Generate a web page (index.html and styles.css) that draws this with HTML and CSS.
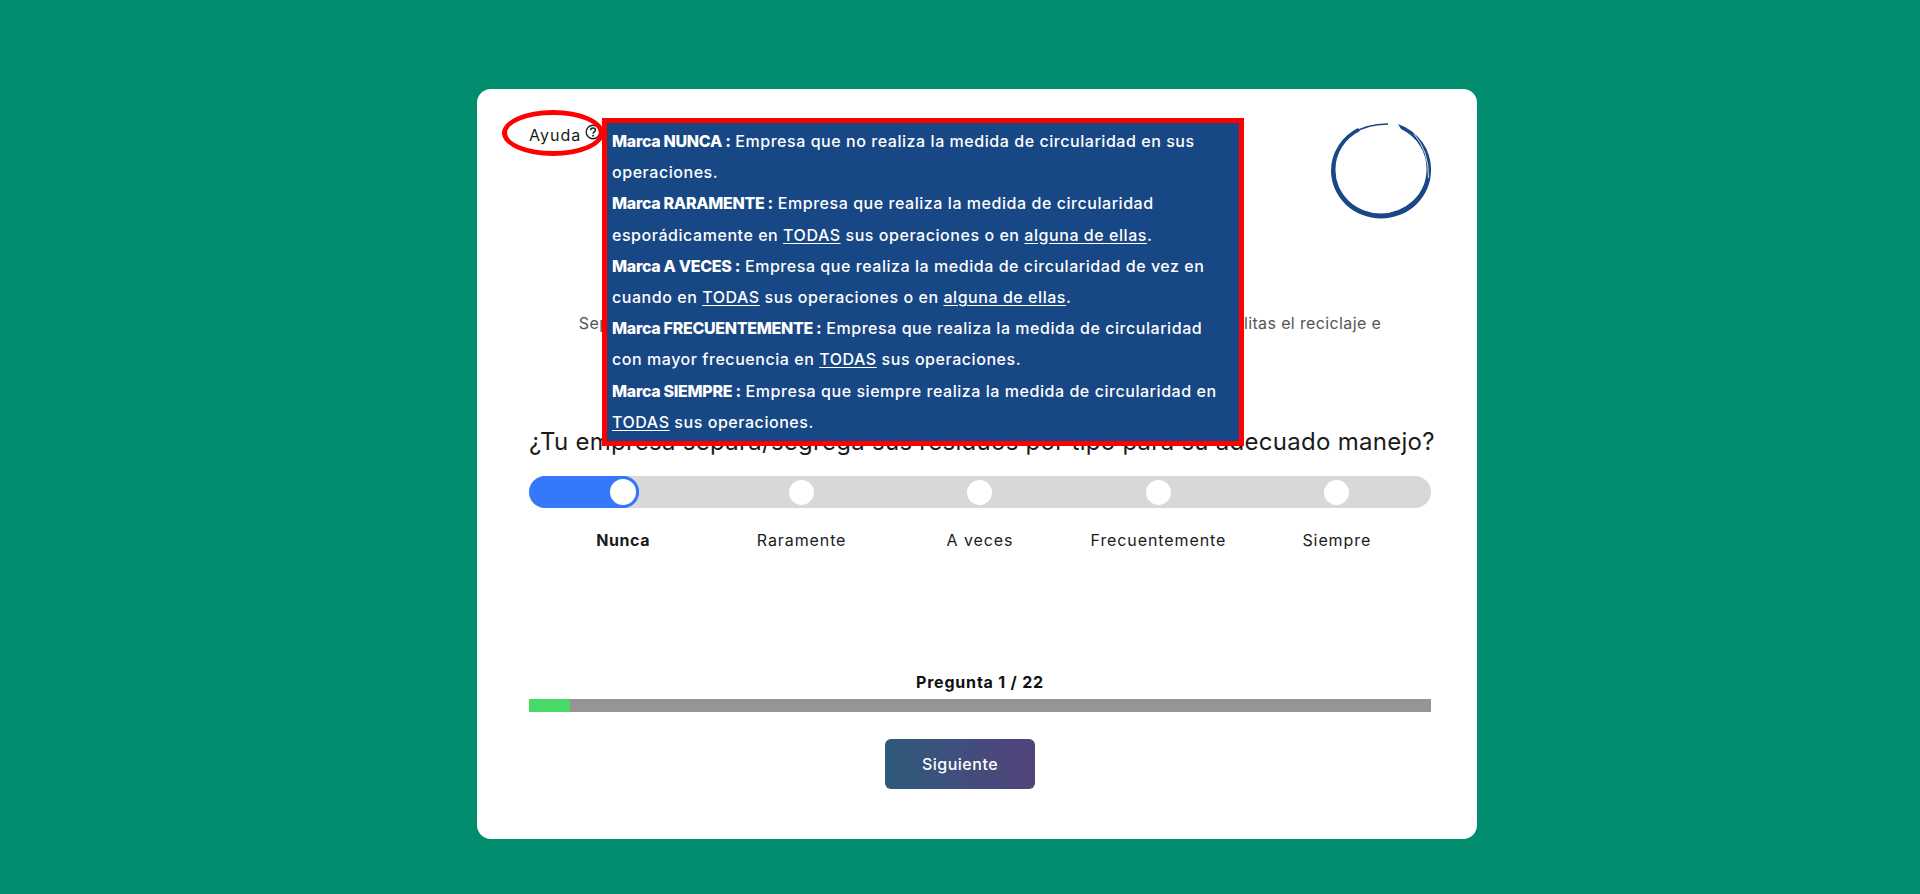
FILE: index.html
```html
<!DOCTYPE html>
<html lang="es">
<head>
<meta charset="utf-8">
<title>Encuesta de circularidad</title>
<link rel="stylesheet" href="styles.css">
</head>
<body>
<main class="card">
  <header class="top">
    <div class="help">
      <span class="help-label">Ayuda</span>
      <svg class="help-icon" viewBox="0 0 16 16" width="16" height="16" aria-hidden="true">
        <circle cx="8" cy="8" r="6.8" fill="none" stroke="#222" stroke-width="1.4"/>
        <path d="M5.6 6.2C5.7 4.6 6.8 3.9 8 3.9c1.4 0 2.4.8 2.4 2.1 0 1.8-2.3 1.8-2.3 3.7" fill="none" stroke="#222" stroke-width="1.5"/>
        <circle cx="8.1" cy="11.8" r="1" fill="#222"/>
      </svg>
    </div>
    <svg class="logo" viewBox="0 0 100 98" width="100" height="98" aria-hidden="true">
      <path d="M67 2A50 48 0 0 1 100 48.5A50 48 0 0 1 50 96.5A50 48 0 0 1 0 48.5A50 48 0 0 1 27 6L29 9A45.5 43 0 0 0 4.5 48A45.5 43 0 0 0 50 91.5A46 43.5 0 0 0 95.5 48A46 44 0 0 0 70 7Z" fill="#184785"/>
      <path d="M19 13Q34 2 57 2" fill="none" stroke="#184785" stroke-width="1.4"/>
      <path d="M83 12Q98 29 97.5 56" fill="none" stroke="#fff" stroke-width=".8"/>
    </svg>
  </header>

  <p class="lead">Separar los residuos desde su origen por tipo evita mezclarlos, reduce costos y facilitas el reciclaje e</p>

  <h2 class="question">¿Tu empresa separa/segrega sus residuos por tipo para su adecuado manejo?</h2>

  <div class="track">
    <div class="fill"></div>
    <div class="stops">
      <span class="stop"><i class="knob"></i></span>
      <span class="stop"><i class="dot"></i></span>
      <span class="stop"><i class="dot"></i></span>
      <span class="stop"><i class="dot"></i></span>
      <span class="stop"><i class="dot"></i></span>
    </div>
  </div>
  <div class="labels">
    <span class="label label-active">Nunca</span>
    <span class="label">Raramente</span>
    <span class="label">A veces</span>
    <span class="label">Frecuentemente</span>
    <span class="label">Siempre</span>
  </div>

  <p class="count">Pregunta 1 / 22</p>
  <div class="progress"><div class="progress-done"></div></div>
  <div class="actions"><button class="next" type="button">Siguiente</button></div>

  <div class="ring"></div>
  <aside class="popup">
    <b>Marca NUNCA :</b> Empresa que no realiza la medida de circularidad en sus<br>
    operaciones.<br>
    <b>Marca RARAMENTE :</b> Empresa que realiza la medida de circularidad<br>
    esporádicamente en <u>TODAS</u> sus operaciones o en <u>alguna de ellas</u>.<br>
    <b>Marca A VECES :</b> Empresa que realiza la medida de circularidad de vez en<br>
    cuando en <u>TODAS</u> sus operaciones o en <u>alguna de ellas</u>.<br>
    <b>Marca FRECUENTEMENTE :</b> Empresa que realiza la medida de circularidad<br>
    con mayor frecuencia en <u>TODAS</u> sus operaciones.<br>
    <b>Marca SIEMPRE :</b> Empresa que siempre realiza la medida de circularidad en<br>
    <u>TODAS</u> sus operaciones.
  </aside>
</main>
</body>
</html>
```
FILE: styles.css
```css
* { box-sizing: border-box; }
html, body { margin: 0; height: 100%; }
body {
  background: #018d6e;
  padding-top: 89px;
  font-family: Inter, "Noto Sans", "Liberation Sans", sans-serif;
  color: #1b1b1b;
  overflow: hidden;
}
.card {
  position: relative;
  width: 1000px;
  height: 750px;
  margin-left: 477px;
  padding: 33px 46px 0 52px;
  background: #fff;
  border-radius: 14px;
}
.top {
  display: flex;
  justify-content: space-between;
  align-items: flex-start;
  height: 98px;
}
.help {
  display: flex;
  align-items: flex-start;
  padding-top: 1px;
}
.help-label { font-size: 16px; line-height: 24px; letter-spacing: 1px; }
.help-icon { margin: 1px 0 0 4px; }
.logo { display: block; }
.lead {
  margin: 91px 0 0;
  margin-left: -6px;
  width: 914px;
  text-align: center;
  white-space: nowrap;
  font-size: 16px;
  line-height: 24px;
  color: #555;
  letter-spacing: .37px;
}
.question {
  margin: 92px 0 0;
  font-size: 24px;
  line-height: 30px;
  font-weight: 400;
  white-space: nowrap;
  color: #1b1b1b;
  letter-spacing: .27px;
}
.track {
  position: relative;
  height: 32px;
  margin-top: 19px;
  background: #d8d8d8;
  border-radius: 16px;
}
.fill {
  position: absolute;
  left: 0;
  top: 0;
  bottom: 0;
  width: 110px;
  background: #3578fa;
  border-radius: 16px;
}
.stops, .labels {
  display: grid;
  grid-template-columns: repeat(5, 1fr);
  padding: 0 5px;
}
.stops { position: relative; height: 100%; }
.stop { display: flex; align-items: center; justify-content: center; }
.knob {
  width: 32px;
  height: 32px;
  background: #fff;
  border: 3px solid #3578fa;
  border-radius: 50%;
}
.dot { width: 25px; height: 25px; background: #fff; border-radius: 50%; }
.labels { margin-top: 20px; }
.label { text-align: center; font-size: 16px; line-height: 24px; white-space: nowrap; letter-spacing: .9px; }
.label-active { font-weight: 700; letter-spacing: .6px; }
.count {
  margin: 118px 0 0;
  text-align: center;
  font-size: 16px;
  line-height: 24px;
  font-weight: 700;
  color: #111;
  letter-spacing: .8px;
}
.progress {
  height: 13px;
  margin-top: 5px;
  background: #959595;
}
.progress-done { width: 41px; height: 100%; background: #48d966; }
.actions { display: flex; justify-content: center; margin-top: 27px; padding-right: 40px; }
.next {
  width: 150px;
  height: 50px;
  padding: 0;
  border: 0;
  border-radius: 6px;
  background: linear-gradient(90deg, #2d5a7b, #52437b);
  color: #fff;
  font: 500 16px/24px Inter, "Noto Sans", sans-serif;
  letter-spacing: .5px;
}
.ring {
  position: absolute;
  left: 25px;
  top: 21px;
  width: 102px;
  height: 46px;
  border: 5px solid #f00;
  border-radius: 50%;
}
.popup {
  position: absolute;
  left: 125px;
  top: 29px;
  width: 642px;
  height: 328px;
  padding: 3px 5px 0;
  background: #184785;
  border: 5px solid #f00;
  color: #fff;
  font-size: 16px;
  line-height: 31.2px;
  font-weight: 500;
  white-space: nowrap;
  letter-spacing: .55px;
}
.popup b { font-weight: 800; letter-spacing: -.3px; }
.popup u { text-underline-offset: 2px; }
```
